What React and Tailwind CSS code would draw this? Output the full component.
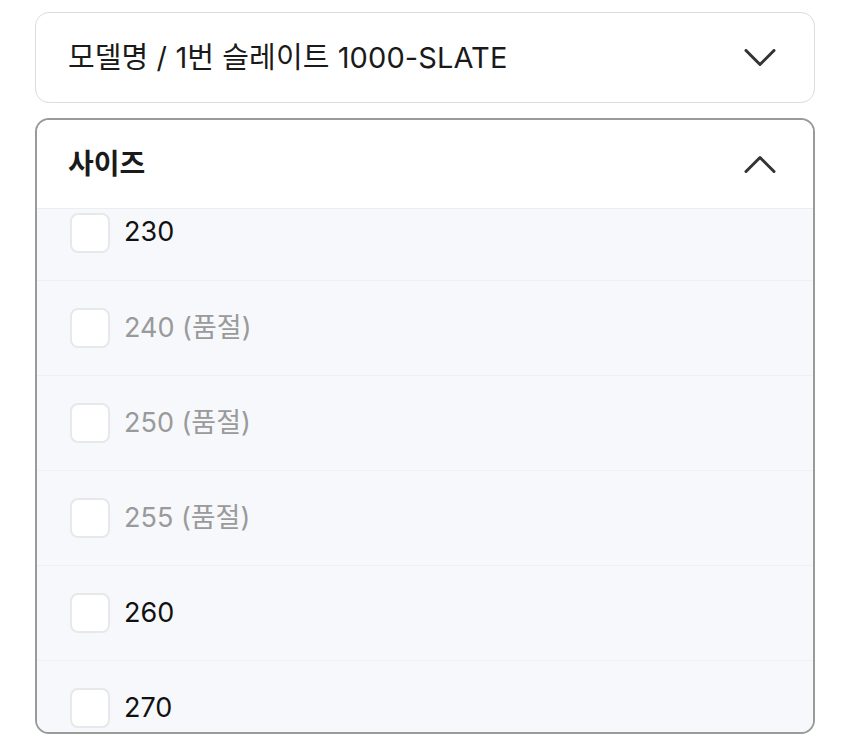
import React from "react";

const sizes = [
  { label: "230", soldOut: false },
  { label: "240", soldOut: true },
  { label: "250", soldOut: true },
  { label: "255", soldOut: true },
  { label: "260", soldOut: false },
  { label: "270", soldOut: false },
];

const Chevron = ({ up }) => (
  <svg width="32" height="18" viewBox="0 0 32 18" fill="none" className="shrink-0">
    <path
      d={up ? "M2 16.5 L16 2.5 L30 16.5" : "M2 1.5 L16 15.5 L30 1.5"}
      stroke="#333"
      strokeWidth="3"
      strokeLinecap="round"
      strokeLinejoin="round"
    />
  </svg>
);

export default function App() {
  return (
    <div
      className="w-[850px] h-[743px] bg-white overflow-hidden px-[35px] pt-[12px]"
      style={{ fontFamily: '"Inter", "Noto Sans CJK KR", sans-serif' }}
    >
      {/* 모델 선택 */}
      <div className="h-[91px] rounded-[14px] border-[1.5px] border-[#dcdcdc] flex items-center justify-between pl-[32px] pr-[38px]">
        <span className="text-[29px] text-[#1a1a1a] tracking-[0.1px]">모델명 / 1번 슬레이트 1000-SLATE</span>
        <Chevron />
      </div>

      {/* 사이즈 */}
      <div className="mt-[15px] h-[616px] rounded-[14px] border-2 border-[#9a9a9a] overflow-hidden flex flex-col">
        <div className="h-[89px] shrink-0 flex items-center justify-between pl-[31px] pr-[37px] border-b border-[#ebedf1] bg-white">
          <span className="text-[28px] font-bold text-[#1a1a1a]">사이즈</span>
          <Chevron up />
        </div>
        <div className="flex-1 overflow-hidden bg-[#f7f8fb]">
          <div className="-mt-[24px]">
            {sizes.map((s, i) => (
              <div
                key={s.label}
                className={`h-[95px] flex items-center gap-[14px] pl-[33px] ${i > 0 ? "border-t border-[#eef0f4]" : ""}`}
              >
                <div className="w-[40px] h-[40px] rounded-[8px] border-2 border-[#e7e8ea] bg-white shrink-0" />
                <span className={`text-[27px] ${s.soldOut ? "text-[#9a9a9a]" : "text-[#111]"}`}>
                  {s.soldOut ? `${s.label} (품절)` : s.label}
                </span>
              </div>
            ))}
          </div>
        </div>
      </div>
    </div>
  );
}
